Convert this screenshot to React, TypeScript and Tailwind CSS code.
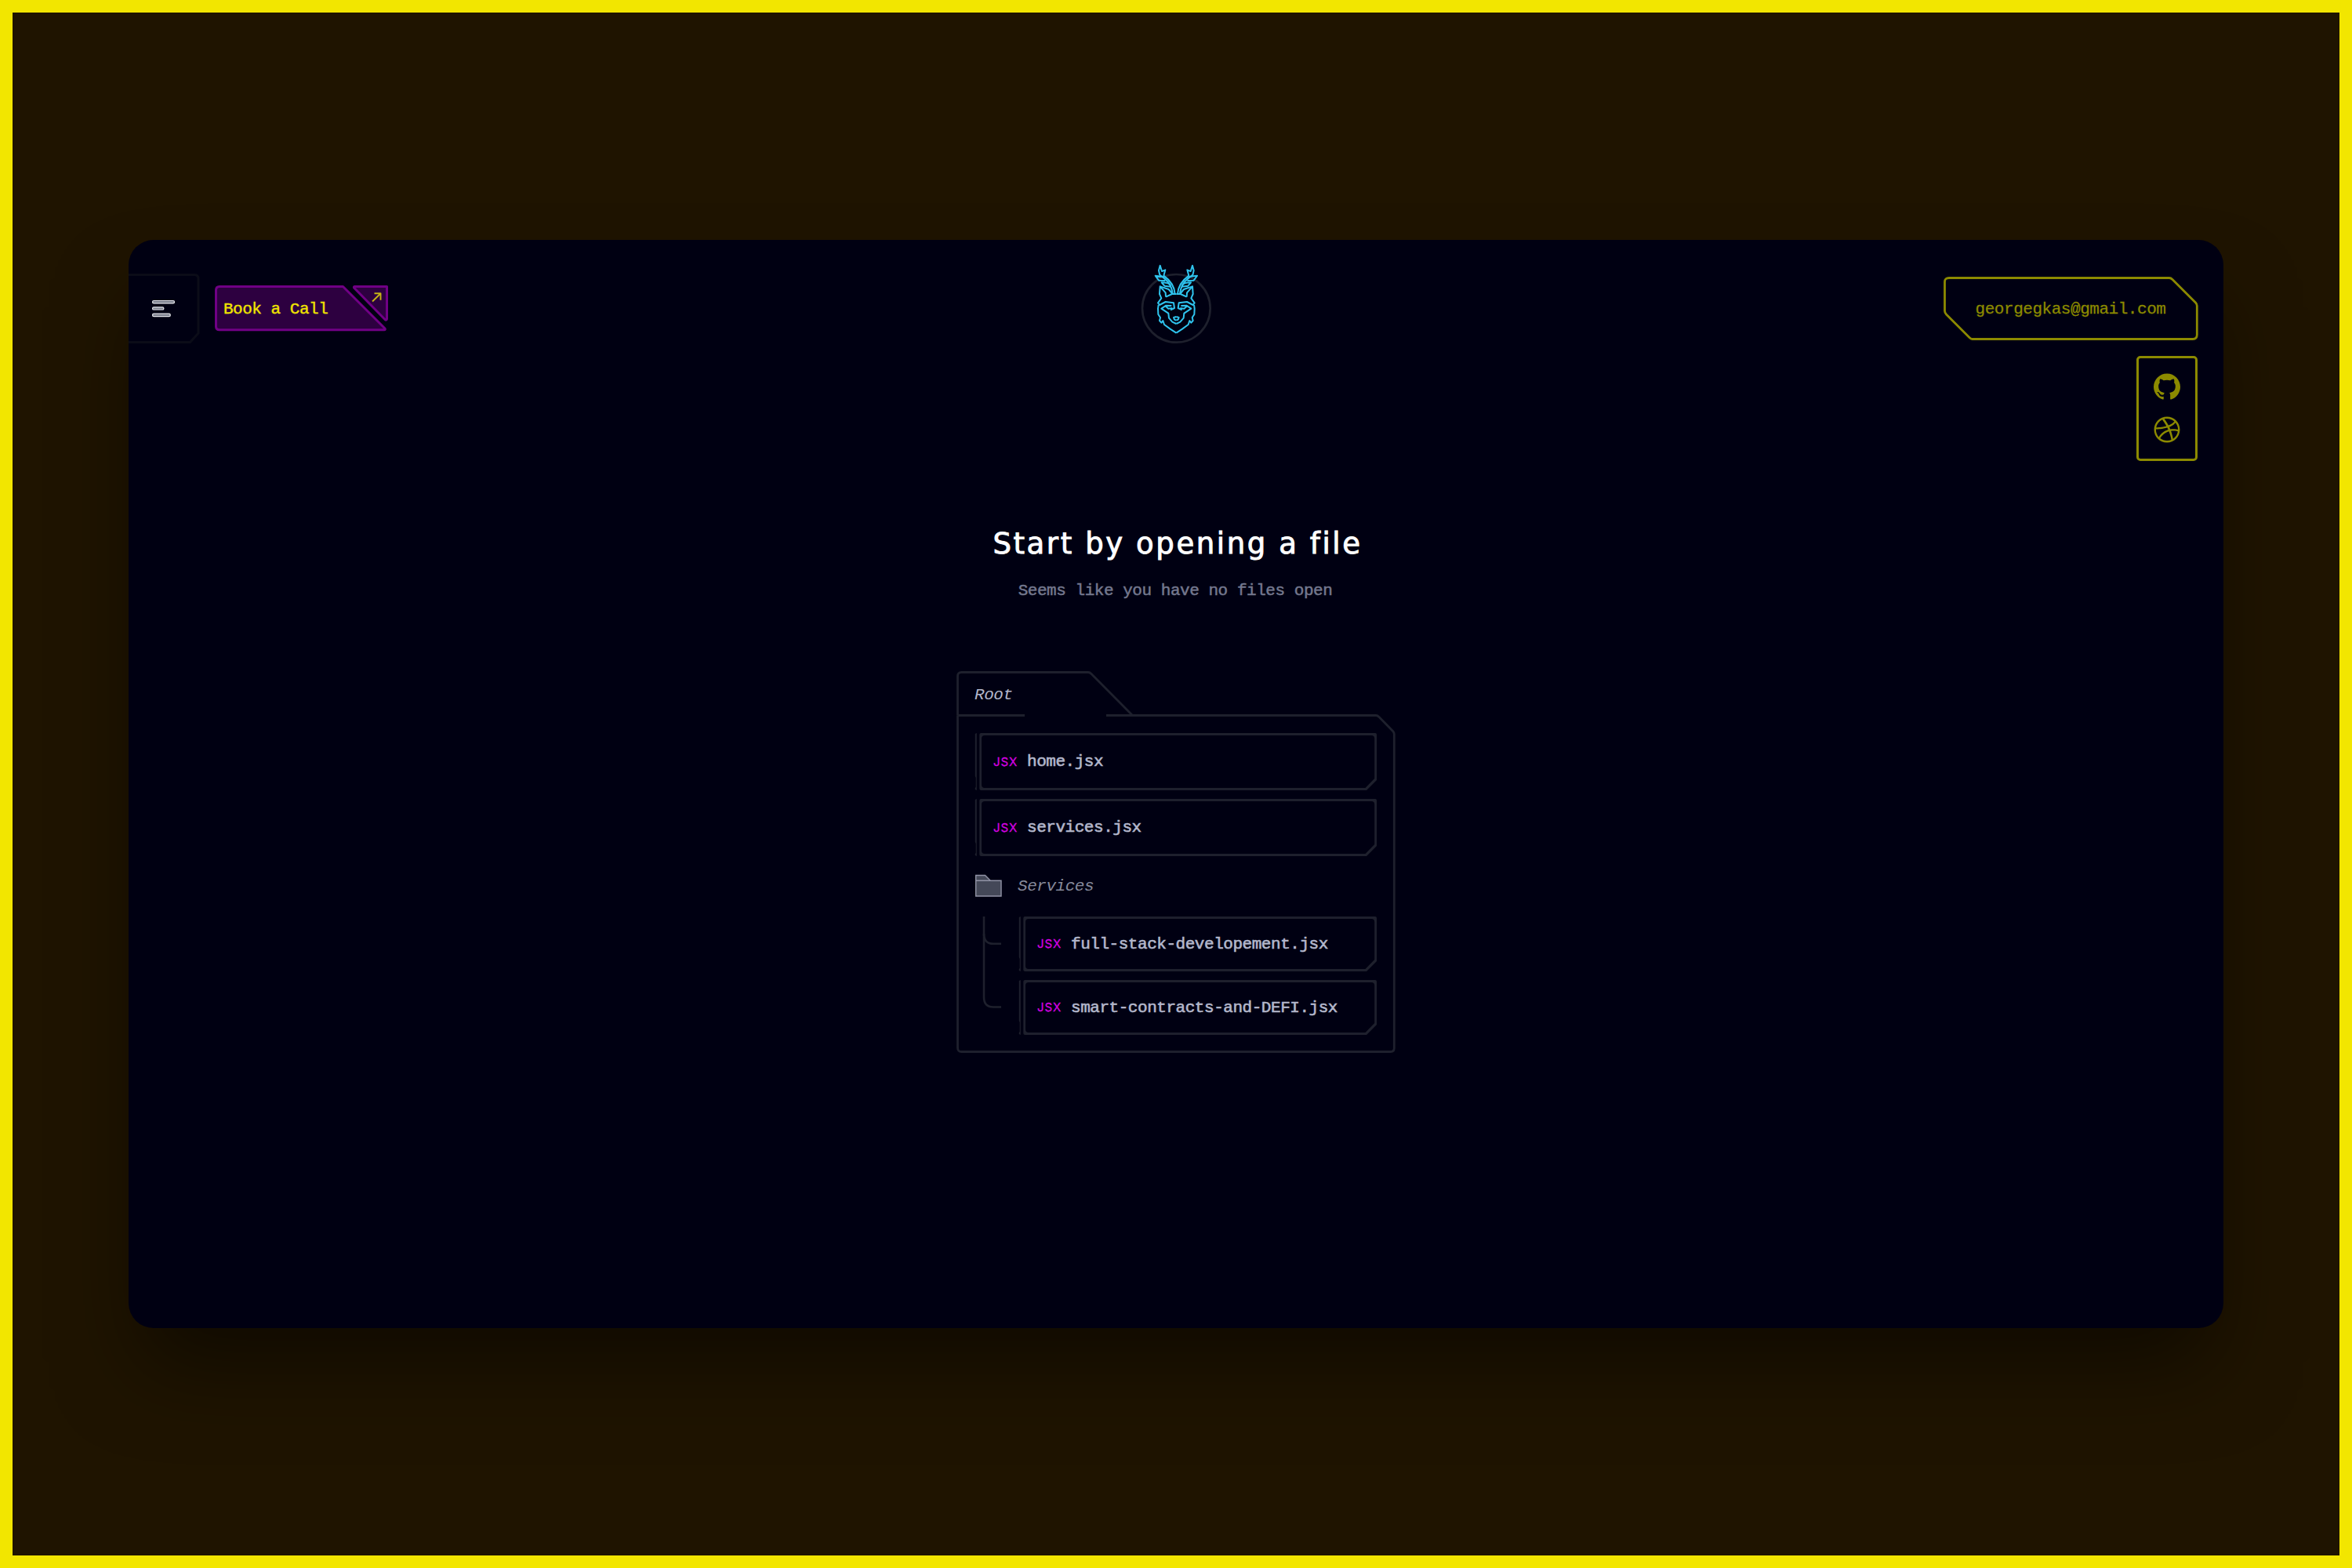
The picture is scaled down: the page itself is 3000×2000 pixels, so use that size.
import type { ReactNode } from "react";
import { FaDribbble } from "react-icons/fa";

const MONO = "font-['Liberation_Mono',monospace]";

function StagHalf() {
  return (
    <g>
      <path d="M176 150C174 118 158 98 133 80L139 58L126 63L119 41L114 60L118 77C144 96 163 112 167 150" />
      <path d="M136 85L101 80L114 98L139 99" />
      <path d="M160 118C156 110 148 106 125 106L136 119L161 122" />
      <path d="M141 161L140 145L119 121L117 150L124 166L111 184L117 192L140 180L171 184L174 204L159 211" />
      <path d="M119 121L152 132L167 150M141 161L165 150L181 150" />
      <path d="M113 192L111 206L112 228L120 240L117 252L124 260L130 252L135 267L158 284L181 299" />
      <path d="M141 197L151 206L166 204M163 195L142 194L124 206L151 224L153 242L166 257L181 264" />
      <path d="M181 237L171 240L174 248L181 251" />
    </g>
  );
}

function Logo() {
  return (
    <svg className="mt-[19px] h-[125px] w-[120px]" viewBox="0 0 360 375" fill="none">
      <circle cx="181" cy="205" r="130" stroke="#1e202d" strokeWidth="8" />
      <g stroke="#2fc4ee" strokeWidth="6" strokeLinejoin="round">
        <StagHalf />
        <g transform="translate(362 0) scale(-1 1)">
          <StagHalf />
        </g>
      </g>
    </svg>
  );
}

function MenuButton() {
  return (
    <button className="relative mt-[43px] h-[90px] w-[92px]">
      <svg className="h-[90px] w-[92px]" viewBox="0 0 92 90" fill="none">
        <path d="M-4 1.500H84Q89 1.500 89 6.500V76L78.500 87.500H-4" stroke="#0b0c18" strokeWidth="3" />
        <g fill="#7b7f8c" stroke="#e4e5ea" strokeWidth="1.2">
          <rect x="30.5" y="34.5" width="28" height="3.4" rx="1.7" />
          <rect x="30.5" y="42.8" width="14.4" height="3.2" rx="1.6" />
          <rect x="30.5" y="51.2" width="22.8" height="3.4" rx="1.7" />
        </g>
      </svg>
    </button>
  );
}

function CallButton() {
  return (
    <button className="relative ml-[18px] mt-[57px] flex h-[60px] w-[224px] items-center">
      <svg className="absolute inset-0 h-[60px] w-[224px]" viewBox="0 0 224 60" fill="#2d0040" stroke="#700085" strokeWidth="3" strokeLinejoin="round">
        <path d="M6 2.500H163.500L217 56Q218 57.800 216 57.800H6Q1.500 57.800 1.500 53.500V7Q1.500 2.500 6 2.500Z" />
        <path d="M178.500 2.500H219.500V44Q219 46 217 44.500L177.500 4Q177 2.500 178.500 2.500Z" />
        <path d="M201 21.500L211.500 11.200M203.500 11.200H211.500V19.700" fill="none" stroke="#c4b416" strokeWidth="1.9" />
      </svg>
      <span className={`${MONO} relative ml-[11px] mt-[4px] whitespace-pre text-[21px] leading-6 tracking-[-0.48px] text-[#f0e400] [-webkit-text-stroke:0.4px_#f0e400]`}>Book a Call</span>
    </button>
  );
}

function Email() {
  return (
    <a className="relative flex h-[82px] w-[325px] items-center justify-center text-[#8c8a00]">
      <svg className="absolute inset-0 h-[82px] w-[325px]" viewBox="0 0 325 82" fill="none" stroke="currentColor" strokeWidth="2.8" strokeLinejoin="round">
        <path d="M7 1.500H288Q290 1.500 292 3.500L321.500 33Q323.300 35 323.300 37V74Q323.300 79.500 318 79.500H36.500Q35 79.500 33 77.500L3.500 48Q1.500 46 1.500 43.500V6.500Q1.500 1.500 7 1.500Z" />
      </svg>
      <span className={`${MONO} mr-px mt-[2px] text-[21px] leading-6 tracking-[-0.46px] [-webkit-text-stroke:0.3px_currentColor]`}>georgegkas@gmail.com</span>
    </a>
  );
}

function Socials() {
  return (
    <div className="mr-[1px] mt-[19px] flex h-[134px] w-[78px] flex-col items-center gap-[21px] rounded-[5px] border-[3px] border-[#8c8a00] pt-[19px] text-[#8c8a00]">
      <svg className="size-[34px] shrink-0" viewBox="0 0 24 24" fill="currentColor">
        <path d="M12 .297c-6.63 0-12 5.373-12 12 0 5.303 3.438 9.800 8.205 11.385.6.113.82-.258.82-.577 0-.285-.01-1.040-.015-2.040-3.338.724-4.042-1.610-4.042-1.610C4.422 18.070 3.633 17.700 3.633 17.700c-1.087-.744.084-.729.084-.729 1.205.084 1.838 1.236 1.838 1.236 1.070 1.835 2.809 1.305 3.495.998.108-.776.417-1.305.760-1.605-2.665-.3-5.466-1.332-5.466-5.930 0-1.310.465-2.380 1.235-3.220-.135-.303-.540-1.523.105-3.176 0 0 1.005-.322 3.300 1.230.960-.267 1.980-.399 3-.405 1.020.006 2.040.138 3 .405 2.280-1.552 3.285-1.230 3.285-1.230.645 1.653.240 2.873.120 3.176.765.840 1.230 1.910 1.230 3.220 0 4.610-2.805 5.625-5.475 5.920.420.360.810 1.096.810 2.220 0 1.606-.015 2.896-.015 3.286 0 .315.210.690.825.570C20.565 22.092 24 17.592 24 12.297c0-6.627-5.373-12-12-12" />
      </svg>
      <FaDribbble className="size-[34px] shrink-0" />
    </div>
  );
}

function FileRow({ name, nested = false }: { name: string; nested?: boolean }) {
  const w = nested ? 457 : 513;
  const h = nested ? 70 : 73;
  return (
    <div className={nested ? "relative flex h-[70px] w-[457px] items-center" : "relative flex h-[73px] w-[513px] items-center"}>
      <svg className="absolute inset-0 size-full" viewBox={`0 0 ${w} ${h}`} fill="none">
        <path
          fill="#1e202d"
          fillRule="evenodd"
          d={`M8.500 0H${w - 2}Q${w} 0 ${w} 2V${h - 13}L${w - 13} ${h}H8.500Q6.300 ${h} 6.300 ${h - 2}V2Q6.300 0 8.500 0ZM13 3Q9 3 9 7V${h - 7}Q9 ${h - 3} 13 ${h - 3}H${w - 14.5}L${w - 2.8} ${h - 15}V7Q${w - 2.8} 3 ${w - 6.8} 3Z`}
        />
        <path fill="#1e202d" d={`M.8 1L2.800 0V${h}L.8 ${h - 1}V${h - 3}L1.700 ${h - 4}V${h - 16}L.8 ${h - 18}Z`} />
      </svg>
      <span className="relative ml-[24px] w-[32px] whitespace-nowrap font-['Inter',sans-serif] text-[15px] leading-6 tracking-[1px] text-[#d400e0] [-webkit-text-stroke:0.3px_#d400e0]">JSX</span>
      <span className={`${MONO} relative ml-[11px] mt-px whitespace-nowrap text-[21px] leading-6 tracking-[-0.46px] text-[#b3b7cb] [-webkit-text-stroke:0.6px_#b3b7cb]`}>{name}</span>
    </div>
  );
}

function FolderCard({ children }: { children: ReactNode }) {
  return (
    <section className="relative mt-[90px] h-[488px] w-[560px]">
      <svg className="absolute inset-0 h-[488px] w-[560px]" viewBox="0 0 560 488" fill="none" stroke="#1e202d" strokeWidth="2.8">
        <path d="M1.500 56.500V6.500Q1.500 1.500 6.500 1.500H168Q170 1.500 172 3.500L224 56" />
        <path d="M1.500 56.500H87" />
        <path d="M191 56.500H535Q537 56.500 539 58.500L557 77Q558.300 78.500 558.300 80.500V481Q558.300 485.500 553.500 485.500H6.500Q1.500 485.500 1.500 480.500V56.500" />
      </svg>
      <div className="relative pl-[23px]">{children}</div>
    </section>
  );
}

export default function App() {
  return (
    <div className="flex h-[2000px] w-[3000px] justify-center border-[16px] border-[#f2e600] bg-[#1f1400]">
      <div className="mt-[290px] flex h-[1388px] w-[2672px] flex-col overflow-hidden rounded-[32px] bg-[#000012] shadow-[0_64px_110px_-20px_rgba(0,0,0,0.5)]">
        <header className="grid h-[354px] shrink-0 grid-cols-[1fr_120px_1fr] items-start">
          <div className="flex items-start">
            <MenuButton />
            <CallButton />
          </div>
          <Logo />
          <div className="flex flex-col items-end pr-[32px] pt-[47px]">
            <Email />
            <Socials />
          </div>
        </header>

        <main className="flex flex-col items-center">
          <h1 className="ml-[4px] mt-[8px] whitespace-nowrap font-['DejaVu_Sans',sans-serif] text-[37px] leading-[52px] tracking-[2.6px] text-white [-webkit-text-stroke:0.9px_#fff]">Start by opening a file</h1>
          <p className={`${MONO} mr-[2px] mt-[22px] whitespace-nowrap text-[21px] leading-6 tracking-[-0.46px] text-[#74788e] [-webkit-text-stroke:0.5px_#74788e]`}>Seems like you have no files open</p>

          <FolderCard>
            <div className={`${MONO} h-[79px] pt-[19px] text-[21px] italic leading-6 tracking-[-0.46px] text-[#b3b7cb]`}>Root</div>
            <div className="flex flex-col gap-[11px]">
              <FileRow name="home.jsx" />
              <FileRow name="services.jsx" />
            </div>
            <div className="flex h-[77px] items-center">
              <svg className="mb-px h-[30px] w-[35px]" viewBox="0 0 35 30" fill="#444858" stroke="#9193a6" strokeWidth="1.4">
                <path d="M1.700 8V1.500H13.500L20 8" />
                <path d="M1.700 8.200H34V28H1.700Z" />
              </svg>
              <span className={`${MONO} ml-[20px] mt-px text-[21px] italic leading-6 tracking-[-0.46px] text-[#878a9c]`}>Services</span>
            </div>
            <div className="flex gap-[22px]">
              <svg className="h-[150px] w-[34px]" viewBox="0 0 34 150" fill="none" stroke="#1e202d" strokeWidth="2.600">
                <path d="M12 0V103Q12 115.500 24 115.500H34" />
                <path d="M12 22Q12 34.800 24 34.800H34" />
              </svg>
              <div className="flex flex-col gap-[11px]">
                <FileRow nested name="full-stack-developement.jsx" />
                <FileRow nested name="smart-contracts-and-DEFI.jsx" />
              </div>
            </div>
          </FolderCard>
        </main>
      </div>
    </div>
  );
}
